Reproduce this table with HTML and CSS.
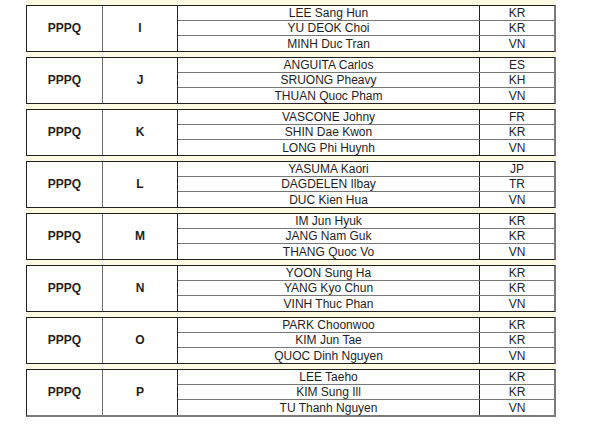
FILE: index.html
```html
<!DOCTYPE html>
<html lang="en">
<head>
<meta charset="utf-8">
<title>PPPQ groups</title>
<link rel="stylesheet" href="styles.css">
</head>
<body>
<div class="sheet">
  <div class="spacer"><span></span><span></span><span></span><span></span></div>
  <div class="group">
    <div class="cell cat">PPPQ</div>
    <div class="cell grp">I</div>
    <div class="players">
      <div class="row"><span class="name">LEE Sang Hun</span><span class="nat">KR</span></div>
      <div class="row"><span class="name">YU DEOK Choi</span><span class="nat">KR</span></div>
      <div class="row"><span class="name">MINH Duc Tran</span><span class="nat">VN</span></div>
    </div>
  </div>
  <div class="spacer"><span></span><span></span><span></span><span></span></div>
  <div class="group">
    <div class="cell cat">PPPQ</div>
    <div class="cell grp">J</div>
    <div class="players">
      <div class="row"><span class="name">ANGUITA Carlos</span><span class="nat">ES</span></div>
      <div class="row"><span class="name">SRUONG Pheavy</span><span class="nat">KH</span></div>
      <div class="row"><span class="name">THUAN Quoc Pham</span><span class="nat">VN</span></div>
    </div>
  </div>
  <div class="spacer"><span></span><span></span><span></span><span></span></div>
  <div class="group">
    <div class="cell cat">PPPQ</div>
    <div class="cell grp">K</div>
    <div class="players">
      <div class="row"><span class="name">VASCONE Johny</span><span class="nat">FR</span></div>
      <div class="row"><span class="name">SHIN Dae Kwon</span><span class="nat">KR</span></div>
      <div class="row"><span class="name">LONG Phi Huynh</span><span class="nat">VN</span></div>
    </div>
  </div>
  <div class="spacer"><span></span><span></span><span></span><span></span></div>
  <div class="group">
    <div class="cell cat">PPPQ</div>
    <div class="cell grp">L</div>
    <div class="players">
      <div class="row"><span class="name">YASUMA Kaori</span><span class="nat">JP</span></div>
      <div class="row"><span class="name">DAGDELEN Ilbay</span><span class="nat">TR</span></div>
      <div class="row"><span class="name">DUC Kien Hua</span><span class="nat">VN</span></div>
    </div>
  </div>
  <div class="spacer"><span></span><span></span><span></span><span></span></div>
  <div class="group">
    <div class="cell cat">PPPQ</div>
    <div class="cell grp">M</div>
    <div class="players">
      <div class="row"><span class="name">IM Jun Hyuk</span><span class="nat">KR</span></div>
      <div class="row"><span class="name">JANG Nam Guk</span><span class="nat">KR</span></div>
      <div class="row"><span class="name">THANG Quoc Vo</span><span class="nat">VN</span></div>
    </div>
  </div>
  <div class="spacer"><span></span><span></span><span></span><span></span></div>
  <div class="group">
    <div class="cell cat">PPPQ</div>
    <div class="cell grp">N</div>
    <div class="players">
      <div class="row"><span class="name">YOON Sung Ha</span><span class="nat">KR</span></div>
      <div class="row"><span class="name">YANG Kyo Chun</span><span class="nat">KR</span></div>
      <div class="row"><span class="name">VINH Thuc Phan</span><span class="nat">VN</span></div>
    </div>
  </div>
  <div class="spacer"><span></span><span></span><span></span><span></span></div>
  <div class="group">
    <div class="cell cat">PPPQ</div>
    <div class="cell grp">O</div>
    <div class="players">
      <div class="row"><span class="name">PARK Choonwoo</span><span class="nat">KR</span></div>
      <div class="row"><span class="name">KIM Jun Tae</span><span class="nat">KR</span></div>
      <div class="row"><span class="name">QUOC Dinh Nguyen</span><span class="nat">VN</span></div>
    </div>
  </div>
  <div class="spacer"><span></span><span></span><span></span><span></span></div>
  <div class="group last">
    <div class="cell cat">PPPQ</div>
    <div class="cell grp">P</div>
    <div class="players">
      <div class="row"><span class="name">LEE Taeho</span><span class="nat">KR</span></div>
      <div class="row"><span class="name">KIM Sung Ill</span><span class="nat">KR</span></div>
      <div class="row"><span class="name">TU Thanh Nguyen</span><span class="nat">VN</span></div>
    </div>
  </div>
</div>
</body>
</html>
```

FILE: styles.css
```css
* {
  box-sizing: border-box;
}

html, body {
  margin: 0;
  padding: 0;
  background: #ffffff;
}

body {
  font-family: "Liberation Sans", Arial, sans-serif;
  font-size: 12px;
  color: #1e1e24;
}

.sheet {
  margin-left: 26px;
  width: 530px;
  display: flex;
  flex-direction: column;
}

.spacer {
  height: 5px;
  display: grid;
  grid-template-columns: 77px 75px 302px 76px;
  background: #fdf9e3;
}

.spacer span {
  border-right: 1px solid #ffffff;
}

.spacer span:last-child {
  border-right: none;
}

.group {
  height: 47px;
  display: grid;
  grid-template-columns: 76px 75px 1fr;
  border-top: 1px solid #222222;
  border-left: 1px solid #222222;
  border-right: 2px solid #7a7a7a;
  border-bottom: 1px solid #222222;
}

.group.last {
  border-bottom: 2px solid #7a7a7a;
  height: 48px;
}

.cell {
  display: flex;
  align-items: center;
  justify-content: center;
  font-weight: bold;
  padding-bottom: 1px;
}

.cat {
  border-right: 1px solid #6e6e6e;
}

.grp {
  border-right: 1px solid #222222;
}

.players {
  display: flex;
  flex-direction: column;
}

.row {
  height: 15px;
  display: grid;
  grid-template-columns: 302px 1fr;
  border-bottom: 1px solid #777777;
}

.row:last-child {
  border-bottom: none;
}

.name,
.nat {
  display: flex;
  align-items: center;
  justify-content: center;
  line-height: 14px;
}

.name {
  border-right: 1px solid #222222;
}
```
